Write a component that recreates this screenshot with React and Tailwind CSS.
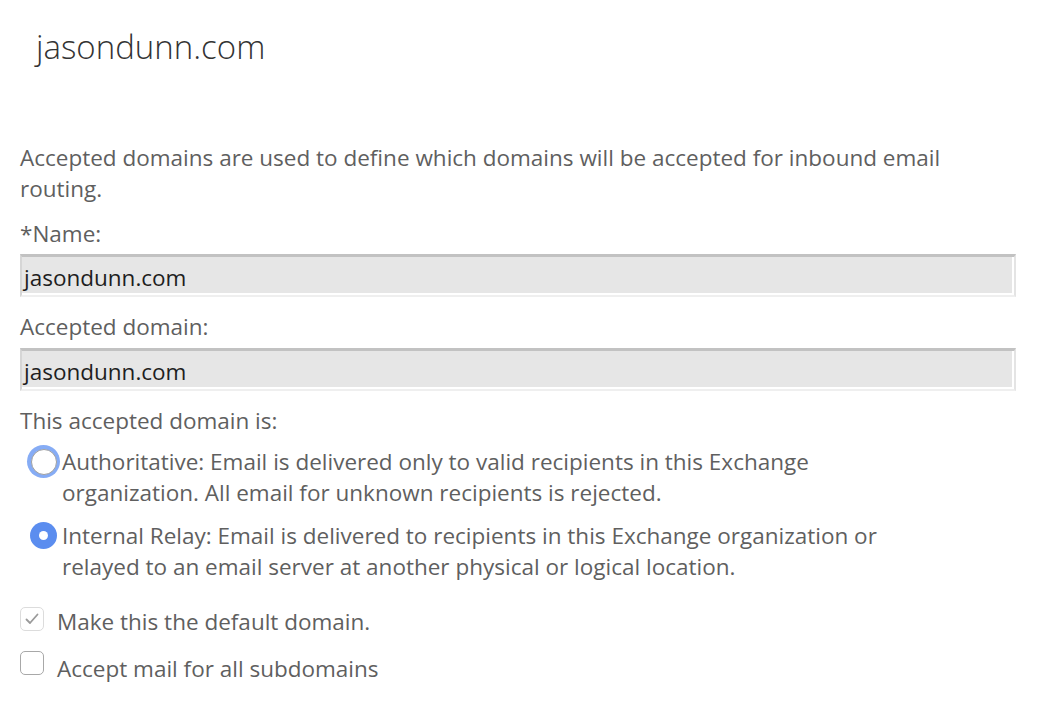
import React, { useState } from 'react';

const font = { fontFamily: '"Open Sans", "Noto Sans", sans-serif' };

const TextBox = ({ value }) => (
  <div className="border-t-[3px] border-l-2 border-b-2 border-r-2 border-t-[#c2c2c2] border-l-[#d6d6d6] border-b-[#efefef] border-r-[#e4e4e4]">
    <div className="h-[38px] bg-[#e6e6e6] border-r-2 border-b-2 border-white flex items-center pt-[5px] pl-[2px] text-[22.5px] text-[#1e1e1e]">
      {value}
    </div>
  </div>
);

const Radio = ({ checked, focused, children }) => (
  <label className="flex items-start">
    <span className="w-[42px] h-[31px] flex items-center shrink-0">
      {checked ? (
        <span className="w-[27px] h-[27px] rounded-full bg-[#5b8def] flex items-center justify-center ml-[10px]">
          <span className="w-[9px] h-[9px] rounded-full bg-white" />
        </span>
      ) : (
        <span
          className={
            'w-[33px] h-[33px] rounded-full flex items-center justify-center ml-[7px] ' +
            (focused ? 'bg-[#86acf5]' : '')
          }
        >
          <span className="w-[26px] h-[26px] rounded-full bg-white border border-[#a0a0a0]" />
        </span>
      )}
    </span>
    <span className="w-[860px] leading-[31px]">{children}</span>
  </label>
);

const Check = ({ checked, disabled, children, boxOffset }) => (
  <label className="flex items-start gap-[13px] leading-[31px]">
    <span
      className={
        'w-[24px] h-[24px] rounded-[5px] border flex items-center justify-center shrink-0 ' +
        (disabled ? 'border-[#dcdcdc]' : 'border-[#a8a8a8]') +
        ' ' +
        boxOffset
      }
    >
      {checked && (
        <svg width="16" height="16" viewBox="0 0 16 16" fill="none">
          <path d="M2.5 8.5 L6 12 L13.5 3.5" stroke="#9a9a9a" strokeWidth="1.8" strokeLinecap="round" strokeLinejoin="round" />
        </svg>
      )}
    </span>
    <span>{children}</span>
  </label>
);

export default function App() {
  const [type] = useState('relay');

  return (
    <div className="w-[1040px] h-[716px] bg-white text-[#5f5f5f] text-[22.5px] pl-[20px] pr-[24px]" style={font}>
      <h1 className="pl-[16px] pt-[25px] text-[33px] font-light text-[#333] leading-[44px]">jasondunn.com</h1>

      <p className="mt-[73px] leading-[31px]">
        Accepted domains are used to define which domains will be accepted for inbound email routing.
      </p>

      <div className="mt-[14px] leading-[31px]">*Name:</div>
      <div className="mt-[5px]">
        <TextBox value="jasondunn.com" />
      </div>

      <div className="mt-[14px] leading-[31px]">Accepted domain:</div>
      <div className="mt-[6px]">
        <TextBox value="jasondunn.com" />
      </div>

      <div className="mt-[14px] leading-[31px]">This accepted domain is:</div>

      <div className="mt-[10px] flex flex-col gap-[12px]">
        <Radio checked={type === 'auth'} focused>
          Authoritative: Email is delivered only to valid recipients in this Exchange organization. All email for
          unknown recipients is rejected.
        </Radio>
        <Radio checked={type === 'relay'}>
          Internal Relay: Email is delivered to recipients in this Exchange organization or relayed to an email
          server at another physical or logical location.
        </Radio>
      </div>

      <div className="mt-[24px] flex flex-col gap-[16px]">
        <Check checked disabled boxOffset="mt-[1px]">
          Make this the default domain.
        </Check>
        <Check boxOffset="-mt-[2px]">Accept mail for all subdomains</Check>
      </div>
    </div>
  );
}
